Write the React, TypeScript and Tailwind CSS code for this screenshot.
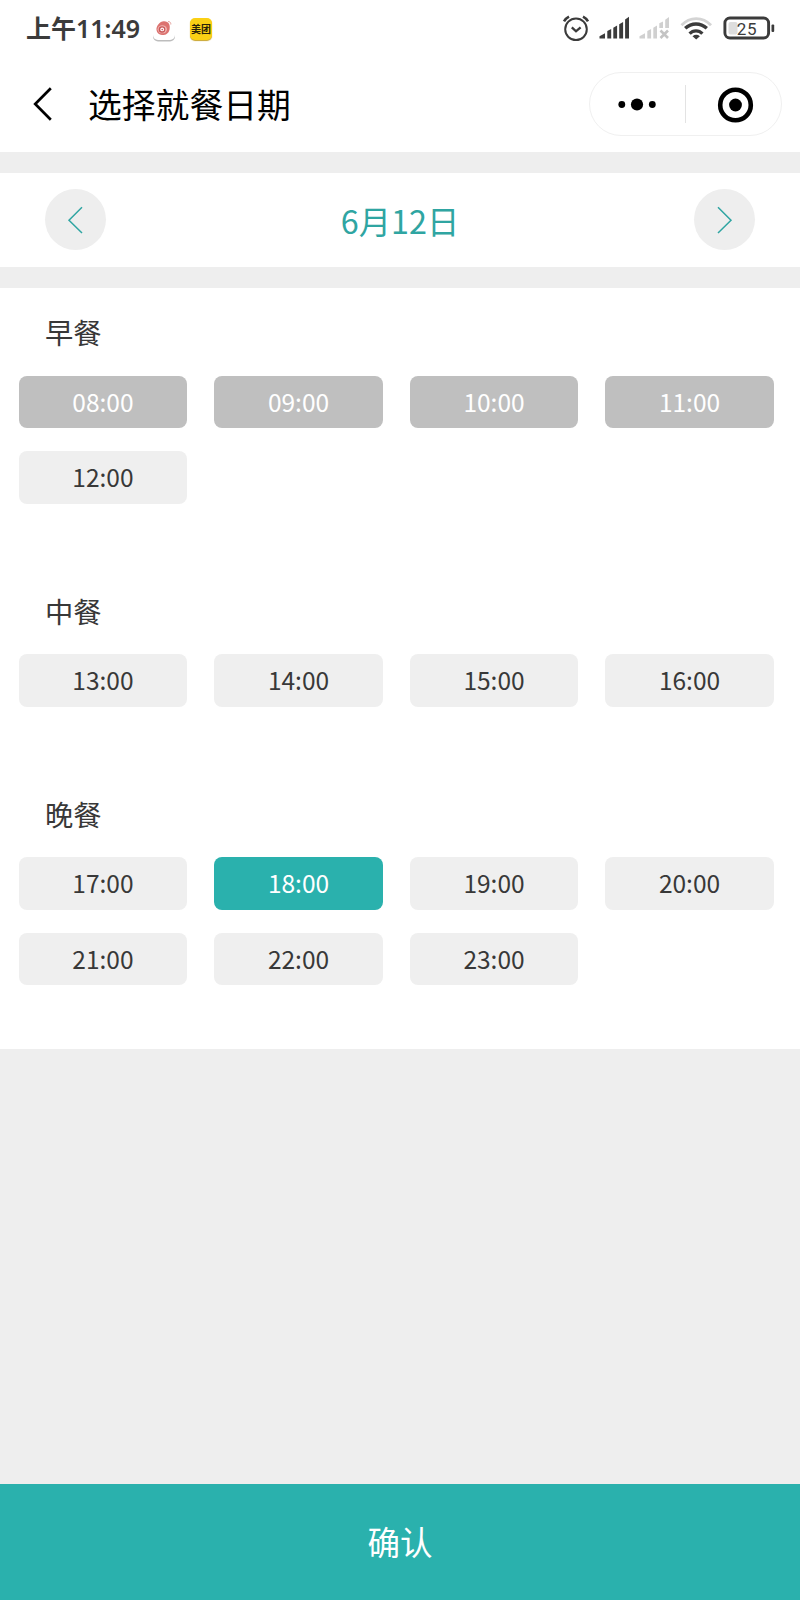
type SlotState = 'open' | 'disabled' | 'selected';

interface Meal {
  name: string;
  slots: string[];
  className: string;
}

const DISABLED = ['08:00', '09:00', '10:00', '11:00'];
const SELECTED = '18:00';

const MEALS: Meal[] = [
  { name: '早餐', slots: ['08:00', '09:00', '10:00', '11:00', '12:00'], className: 'h-[278.5px]' },
  { name: '中餐', slots: ['13:00', '14:00', '15:00', '16:00'], className: 'h-[203px]' },
  { name: '晚餐', slots: ['17:00', '18:00', '19:00', '20:00', '21:00', '22:00', '23:00'], className: 'h-[279.5px]' },
];

const SLOT_STYLE: Record<SlotState, string> = {
  open: 'bg-[#efefef] text-[#383838]',
  disabled: 'bg-[#bfbfbf] text-white',
  selected: 'bg-[#2ab1ad] text-white',
};

function slotState(time: string): SlotState {
  if (time === SELECTED) return 'selected';
  return DISABLED.includes(time) ? 'disabled' : 'open';
}

function WeiboIcon() {
  return (
    <svg className="h-[24px] w-[24px]" viewBox="0 0 24 24">
      <rect x="1" y="2.5" width="22" height="21" rx="5" fill="#bdbdbd" />
      <rect x="1" y="1" width="22" height="21" rx="5" fill="#fff" />
      <path d="M4.500 12C4 8 8 3 12 3.200c5 .1 6.500 4 5.500 8.500-1 4-4 5.500-7.500 5.300-3-.2-5.200-2-5.500-5z" fill="#dc7370" />
      <ellipse cx="10.300" cy="11.300" rx="4.700" ry="4" fill="#f0b5b2" />
      <circle cx="10" cy="11.500" r="3.300" fill="#c95757" />
      <circle cx="10.200" cy="11.400" r="1.900" fill="#fff" />
      <circle cx="10.200" cy="11.600" r=".8" fill="#c95757" />
      <path d="M16 3.500c2 0 3 1.200 2.800 3" fill="none" stroke="#e3a09c" strokeWidth="1" />
    </svg>
  );
}

function StatusIcons() {
  return (
    <svg className="h-[60px] w-[250px]" viewBox="0 0 250 60" fill="none">
      <g stroke="#3b3b3b" strokeWidth="2">
        <circle cx="26" cy="29.300" r="10.800" />
        <path d="M21.800 27.300l4.200 4 4.600-4" strokeWidth="2.300" />
        <path d="M14 21.300c1.200-2 2.800-3.600 5-4.700M38 21.300c-1.200-2-2.800-3.600-5-4.700" strokeWidth="2.600" />
      </g>
      <g fill="#3b3b3b">
        <path d="M49.500 38.500v-2.200l5.500-3v5.200zM57.300 38.500v-7.500l3.900-2v9.500zM63.300 38.500V27.800l3.800-2.200v12.900zM69.200 38.500V24.300l3.900-2.400v16.600zM75.100 38.500V19.500l3.900-2.700v21.700z" />
      </g>
      <g fill="#d0d0d0">
        <path d="M89.500 38.500v-2.200l5.500-3v5.200zM97.300 38.500v-7.500l3.800-2v9.500zM103.300 38.500V27.800l3.700-2.200v12.900zM109.300 28V23.300l3.700-1.800V28zM115.200 28v-8.300l3.800-2.700v11z" />
        <path d="M110.500 30.500l7.500 7.500M118 30.500l-7.500 7.500" stroke="#c4c4c4" strokeWidth="2.600" />
      </g>
      <g strokeWidth="3">
        <path d="M131.500 25.300c8.300-9 21.200-9 29.500 0" stroke="#d4d4d4" strokeWidth="2.800" />
        <path d="M135.200 28.300c6.300-5.800 15.300-5.800 21.600 0" stroke="#3b3b3b" strokeWidth="3.400" />
        <path d="M139.600 33.700c3.600-3.900 9.200-3.900 12.800 0" stroke="#3b3b3b" strokeWidth="3.200" />
        <path d="M142.500 36.200q3.700-2.800 7.400 0l-3.700 3.400z" fill="#3b3b3b" />
      </g>
      <rect x="174.900" y="18" width="43.700" height="20" rx="5" stroke="#3b3b3b" strokeWidth="2.900" />
      <rect x="178.500" y="22" width="9" height="12.500" rx="2" fill="#ddd" />
      <rect x="221.500" y="24.500" width="2.700" height="7.500" rx="1" fill="#3b3b3b" />
      <text x="197" y="34.600" textAnchor="middle" fill="#3b3b3b" fontSize="17" fontFamily="Roboto, sans-serif" letterSpacing=".6">25</text>
    </svg>
  );
}

function ArrowButton({ direction }: { direction: 'left' | 'right' }) {
  return (
    <button
      aria-label={direction === 'left' ? '前一天' : '后一天'}
      className="flex h-[61px] w-[61px] items-center justify-center rounded-full bg-[#eeeeee]"
    >
      <svg className="h-[61px] w-[61px]" viewBox="0 0 61 61" fill="none" stroke="#2fa5a2" strokeWidth="1.500">
        <path d={direction === 'left' ? 'M37 18.200L24 31.200l13 12.800' : 'M24 18.200l13 13-13 12.800'} />
      </svg>
    </button>
  );
}

export default function App() {
  return (
    <main className="flex h-[1600px] w-[800px] flex-col overflow-hidden bg-[#eeeeee] font-['Noto_Sans_CJK_SC',sans-serif]">
      <header className="h-[152px] bg-white">
        <div className="flex h-[60px] items-center">
          <div className="flex w-[550px] items-center pl-[26px]">
            <span className="w-[126px] pb-[3px] whitespace-nowrap font-['Noto_Sans','Noto_Sans_CJK_SC',sans-serif] text-[25px] leading-[53px] font-semibold text-[#3b3b3b]">上午11:49</span>
            <WeiboIcon />
            <span className="mb-[3px] ml-[14px] flex h-[22px] w-[22px] items-center justify-center rounded-[5px] bg-[#fbd014] text-[10px] leading-none font-bold whitespace-nowrap text-[#2b2308] shadow-[0_1px_1px_#c9a52c]">美团</span>
          </div>
          <StatusIcons />
        </div>
        <div className="flex h-[92px] items-start">
          <svg className="mt-[26px] ml-[32px] h-[36px] w-[22px]" viewBox="0 0 22 36" fill="none" stroke="#000" strokeWidth="2.700">
            <path d="M18.800 2.200L3.200 18l15.600 15.800" />
          </svg>
          <h1 className="mt-[19px] ml-[34px] w-[501px] text-[33.800px] leading-[50px] text-black">选择就餐日期</h1>
          <div className="mt-[12px] flex h-[64px] w-[193px] items-center rounded-full border border-[#f0f0f0]">
            <svg className="h-[62px] w-[191px]" viewBox="0 0 191 62">
              <circle cx="31.800" cy="31.500" r="3.400" />
              <circle cx="47" cy="31.500" r="6.100" />
              <circle cx="62.300" cy="31.500" r="3.400" />
              <path d="M95.500 12v38" stroke="#e3e3e3" />
              <circle cx="145.500" cy="32" r="15.300" fill="none" stroke="#000" strokeWidth="4.600" />
              <circle cx="145.500" cy="32" r="6.400" />
            </svg>
          </div>
        </div>
      </header>

      <section className="mt-[21px] flex h-[94px] items-center justify-between bg-white px-[45px] pb-[0.500px]">
        <ArrowButton direction="left" />
        <span className="text-[32.300px] leading-[48px] text-[#2fa5a2]">6月12日</span>
        <ArrowButton direction="right" />
      </section>

      <section className="mt-[21px] h-[761px] bg-white">
        {MEALS.map((meal) => (
          <div key={meal.name} className={meal.className}>
            <h2 className="h-[87.500px] pt-[24px] pl-[45px] text-[28.300px] leading-[40px] text-[#383838]">{meal.name}</h2>
            <div className="grid grid-cols-4 gap-x-[26.600px] gap-y-[23px] pr-[26px] pl-[18.500px]">
              {meal.slots.map((time) => (
                <button
                  key={time}
                  className={`h-[52.500px] rounded-[8px] text-[24.500px] leading-[52px] ${SLOT_STYLE[slotState(time)]}`}
                >
                  {time}
                </button>
              ))}
            </div>
          </div>
        ))}
      </section>

      <button className="mt-auto h-[116px] bg-[#2ab1ad] pb-[2px] text-[32.500px] leading-[114px] text-white">确认</button>
    </main>
  );
}
